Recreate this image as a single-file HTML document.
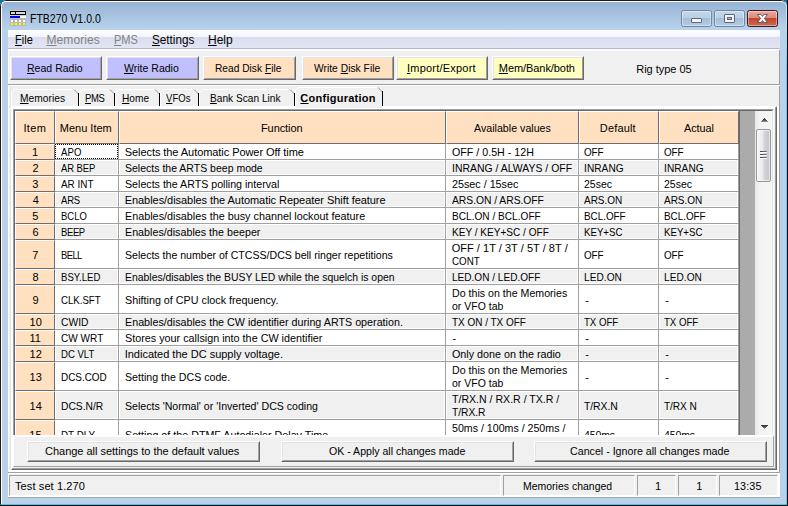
<!DOCTYPE html><html><head><meta charset="utf-8"><title>FTB270 V1.0.0</title><style>
*{margin:0;padding:0;box-sizing:border-box}
html,body{width:788px;height:506px;overflow:hidden;background:#000}
body{font-family:"Liberation Sans", sans-serif;font-size:11px;color:#000;position:relative}
.a{position:absolute}
.t{position:absolute;white-space:nowrap;line-height:16px;height:16px;transform-origin:0 0}
u{text-decoration:underline;text-underline-offset:1px;text-decoration-thickness:1px}
#win{position:absolute;left:0;top:0;width:787px;height:505px;background:#b9d1ea;border-radius:6px 6px 0 0;overflow:hidden}
.btn{position:absolute;border-top:1px solid #fff;border-left:1px solid #fff;border-right:1px solid #696969;border-bottom:1px solid #696969}
.btn:after{content:"";position:absolute;left:0;top:0;right:0;bottom:0;border-right:1px solid #a0a0a0;border-bottom:1px solid #a0a0a0;border-left:1px solid #e3e3e3;border-top:1px solid #e3e3e3}
.hc{position:absolute;top:0;height:33px;background:#ffe0c0;border-top:1px solid #fff;border-left:1px solid #fff;border-right:1px solid #6d6d6d;border-bottom:1px solid #6d6d6d}
.ic{position:absolute;left:0;width:40px;background:#ffe0c0;border-top:1px solid #fff;border-left:1px solid #fff;border-right:1px solid #6d6d6d;border-bottom:1px solid #6d6d6d}
.c{position:absolute;border-right:1px solid #a0a0a0;border-bottom:1px solid #a0a0a0;background:#fff}
.c.g{background:#f0f0f0;box-shadow:inset 1px 1px 0 #fff, inset -1px -1px 0 #fff}
.sp{position:absolute;top:475px;height:21px;border-top:1px solid #a0a0a0;border-left:1px solid #a0a0a0;border-right:1px solid #fff;border-bottom:1px solid #fff}
</style></head><body>
<div class="a" style="left:0;top:0;width:8px;height:8px;background:#0079ad"></div>
<div class="a" style="left:779px;top:0;width:8px;height:8px;background:#0079ad"></div>
<div id="win">
<div class="a" style="left:0;top:0;width:787px;height:30px;background:linear-gradient(#98b4d4 0px,#9ab6d6 4px,#b9d3ec 30px)"></div>
<div class="a" style="left:0;top:0;width:787px;height:505px;border-radius:6px 6px 0 0;border-left:1px solid #1c1c1c;border-top:1px solid #1c1c1c;border-right:1px solid #52d3f6;border-bottom:1px solid #37d0f5"></div>
<div class="a" style="left:786px;top:5px;width:1px;height:60px;background:linear-gradient(#b4f0ff,#a8ecff 40%,#52d3f6)"></div>
<div class="a" style="left:1px;top:1px;width:785px;height:503px;border-radius:5px 5px 0 0;border-left:1px solid #fff;border-top:1px solid #fff"></div>
<svg class="a" style="left:10px;top:10px" width="16" height="16" viewBox="0 0 16 16" shape-rendering="crispEdges"><rect x="0" y="0" width="16" height="16" fill="#b8b8b8"/><rect x="0" y="0" width="16" height="1" fill="#c8c8c8"/><rect x="0" y="1" width="16" height="4" fill="#000"/><rect x="1" y="2" width="4" height="2" fill="#d8d8d8"/><rect x="6" y="2" width="9" height="2" fill="#d8d8d8"/><rect x="0" y="5" width="16" height="1" fill="#d0d0d0"/><rect x="0" y="6" width="10" height="2" fill="#0000ff"/><rect x="10" y="6" width="6" height="2" fill="#fff"/><rect x="0" y="8" width="16" height="1" fill="#c0c0c0"/><rect x="1" y="10" width="2" height="2" fill="#fff"/><rect x="1" y="13" width="2" height="2" fill="#ffff00"/><rect x="5" y="10" width="2" height="2" fill="#fff"/><rect x="5" y="13" width="2" height="2" fill="#ffff00"/><rect x="9" y="10" width="2" height="2" fill="#fff"/><rect x="9" y="13" width="2" height="2" fill="#ffff00"/><rect x="13" y="10" width="2" height="2" fill="#fff"/><rect x="13" y="13" width="2" height="2" fill="#ffff00"/></svg>
<div class="t" id="title" style="left:30.15px;top:11px;letter-spacing:0.01px;transform:scaleX(0.8756);font-size:12px;">FTB270 V1.0.0</div>
<div class="a" style="left:681px;top:10px;width:31px;height:17px;border:1px solid #6f86a3;border-radius:2.5px;background:linear-gradient(#c3d6ea 0%,#bcd0e6 45%,#a5bedb 50%,#b4cbe4 100%);box-shadow:inset 0 0 0 1px rgba(255,255,255,.4)"></div>
<div class="a" style="left:714px;top:10px;width:31px;height:17px;border:1px solid #6f86a3;border-radius:2.5px;background:linear-gradient(#c3d6ea 0%,#bcd0e6 45%,#a5bedb 50%,#b4cbe4 100%);box-shadow:inset 0 0 0 1px rgba(255,255,255,.4)"></div>
<div class="a" style="left:747px;top:10px;width:31px;height:17px;border:1px solid #431422;border-radius:2.5px;background:linear-gradient(#e9a99b 0%,#dd8d7b 45%,#c4452b 50%,#cd6a50 100%);box-shadow:inset 0 0 0 1px rgba(255,255,255,.4)"></div>
<div class="a" style="left:691px;top:18px;width:11px;height:5px;background:#f4f4f4;border:1px solid #5a6a7c;border-radius:1px"></div>
<div class="a" style="left:724px;top:14px;width:11px;height:9px;background:#f4f4f4;border:1px solid #5a6a7c;border-radius:1px"></div>
<div class="a" style="left:727px;top:17px;width:5px;height:3px;background:#9db6d3;border:1px solid #5a6a7c"></div>
<svg class="a" style="left:756px;top:13px" width="13" height="11" viewBox="0 0 13 11"><path d="M1.5 1.5 L4.9 1.5 L6.5 3.4 L8.1 1.5 L11.5 1.5 L8.4 5.5 L11.5 9.5 L8.1 9.5 L6.5 7.6 L4.9 9.5 L1.5 9.5 L4.6 5.5 Z" fill="#fff" stroke="#50546a" stroke-width="0.9" stroke-linejoin="round"/></svg>
<div class="a" style="left:8px;top:30px;width:772px;height:467px;background:#f0f0f0"></div>
<div class="a" style="left:8px;top:497px;width:772px;height:1px;background:#a3a9b3"></div>
<div class="a" style="left:8px;top:30px;width:772px;height:21px;background:linear-gradient(#ffffff 0px,#f2f4fa 7px,#d9ddee 7px,#e2e5f3 18px,#b4b9cf 18px,#b4b9cf 19px,#fcfcfe 19px,#fcfcfe 21px)"></div>
<div class="t" id="menu0" style="left:15.03px;top:32px;letter-spacing:0.08px;transform:scaleX(0.9145);font-size:12px;"><u>F</u>ile</div>
<div class="t" id="menu1" style="left:46.49px;top:32px;letter-spacing:0.091px;font-size:12px;color:#838383;"><u>M</u>emories</div>
<div class="t" id="menu2" style="left:114.45px;top:32px;letter-spacing:0px;transform:scaleX(0.9178);font-size:12px;color:#838383;"><u>P</u>MS</div>
<div class="t" id="menu3" style="left:152.25px;top:32px;letter-spacing:0px;transform:scaleX(0.9761);font-size:12px;"><u>S</u>ettings</div>
<div class="t" id="menu4" style="left:208.12px;top:32px;letter-spacing:-0.074px;font-size:12px;"><u>H</u>elp</div>
<div class="a" style="left:8px;top:49px;width:1px;height:448px;background:#fff"></div>
<div class="a" style="left:779px;top:50px;width:1px;height:423px;background:#a0a0a0"></div>
<div class="a" style="left:777px;top:106px;width:2px;height:366px;background:#fff"></div>
<div class="a" style="left:9px;top:470px;width:770px;height:2px;background:#fff"></div>
<div class="a" style="left:10px;top:86px;width:1px;height:384px;background:#e6e6e6"></div>
<div class="btn" style="left:10px;top:56px;width:92px;height:24px;background:#c0c0ff"></div>
<div class="t" id="tb0" style="left:26.7px;top:60px;letter-spacing:0.01px;transform:scaleX(0.9567);"><u>R</u>ead Radio</div>
<div class="btn" style="left:106px;top:56px;width:93px;height:24px;background:#c0c0ff"></div>
<div class="t" id="tb1" style="left:124px;top:60px;letter-spacing:0px;transform:scaleX(0.9568);"><u>W</u>rite Radio</div>
<div class="btn" style="left:203px;top:56px;width:93px;height:24px;background:#ffe0c0"></div>
<div class="t" id="tb2" style="left:214.91px;top:60px;letter-spacing:0.024px;transform:scaleX(0.9232);">Read Disk <u>F</u>ile</div>
<div class="btn" style="left:302px;top:56px;width:92px;height:24px;background:#ffe0c0"></div>
<div class="t" id="tb3" style="left:313.87px;top:60px;letter-spacing:0.013px;transform:scaleX(0.9334);">Write <u>D</u>isk File</div>
<div class="btn" style="left:396px;top:56px;width:92px;height:24px;background:#ffffc0"></div>
<div class="t" id="tb4" style="left:407.06px;top:60px;letter-spacing:0.211px;"><u>I</u>mport/Export</div>
<div class="btn" style="left:492px;top:56px;width:92px;height:24px;background:#ffffc0"></div>
<div class="t" id="tb5" style="left:498.87px;top:60px;letter-spacing:-0.076px;"><u>M</u>em/Bank/both</div>
<div class="t" id="rig" style="left:636.31px;top:61px;letter-spacing:-0.035px;">Rig type 05</div>
<div class="a" style="left:8px;top:84px;width:772px;height:1px;background:#a0a0a0"></div>
<div class="a" style="left:8px;top:85px;width:772px;height:1px;background:#fff"></div>
<div class="a" style="left:11px;top:106px;width:766px;height:364px;border-left:2px solid #fff;border-top:3px solid #fff;border-right:2px solid #696969;border-bottom:2px solid #696969"></div>
<div class="a" style="left:12px;top:468px;width:764px;height:1px;background:#a0a0a0"></div>
<div class="a" style="left:775px;top:107px;width:1px;height:362px;background:#a0a0a0"></div>
<svg class="a" style="left:0;top:80px" width="400" height="30" viewBox="0 80 400 30"><path d="M11.5 107 L11.5 92.5 L14.5 89.5 L73.5 89.5" fill="none" stroke="#fff" stroke-width="1"/><path d="M74 89.5 L78.5 94" fill="none" stroke="#8a8a8a" stroke-width="0.9"/><path d="M78.5 93 L78.5 106" fill="none" stroke="#000" stroke-width="1" shape-rendering="crispEdges"/><path d="M79.5 107 L79.5 92.5 L82.5 89.5 L109.5 89.5" fill="none" stroke="#fff" stroke-width="1"/><path d="M110 89.5 L114.5 94" fill="none" stroke="#8a8a8a" stroke-width="0.9"/><path d="M114.5 93 L114.5 106" fill="none" stroke="#000" stroke-width="1" shape-rendering="crispEdges"/><path d="M115.5 107 L115.5 92.5 L118.5 89.5 L154.5 89.5" fill="none" stroke="#fff" stroke-width="1"/><path d="M155 89.5 L159.5 94" fill="none" stroke="#8a8a8a" stroke-width="0.9"/><path d="M159.5 93 L159.5 106" fill="none" stroke="#000" stroke-width="1" shape-rendering="crispEdges"/><path d="M160.5 107 L160.5 92.5 L163.5 89.5 L193.5 89.5" fill="none" stroke="#fff" stroke-width="1"/><path d="M194 89.5 L198.5 94" fill="none" stroke="#8a8a8a" stroke-width="0.9"/><path d="M198.5 93 L198.5 106" fill="none" stroke="#000" stroke-width="1" shape-rendering="crispEdges"/><path d="M199.5 107 L199.5 92.5 L202.5 89.5 L289.5 89.5" fill="none" stroke="#fff" stroke-width="1"/><path d="M290 89.5 L294.5 94" fill="none" stroke="#8a8a8a" stroke-width="0.9"/><path d="M294.5 93 L294.5 106" fill="none" stroke="#000" stroke-width="1" shape-rendering="crispEdges"/><path d="M295.5 107 L295.5 90.5 L298.5 87.5 L377.5 87.5" fill="none" stroke="#fff" stroke-width="1"/><path d="M378 87.5 L382.5 92" fill="none" stroke="#8a8a8a" stroke-width="0.9"/><path d="M382.5 91 L382.5 106" fill="none" stroke="#000" stroke-width="1" shape-rendering="crispEdges"/></svg>
<div class="a" style="left:296px;top:106px;width:86px;height:2px;background:#f0f0f0"></div>
<div class="t" id="tab0" style="left:19.83px;top:90px;letter-spacing:0.036px;transform:scaleX(0.9274);"><u>M</u>emories</div>
<div class="t" id="tab1" style="left:85.16px;top:90px;letter-spacing:-0.359px;transform:scaleX(0.86);"><u>P</u>MS</div>
<div class="t" id="tab2" style="left:122.1px;top:90px;letter-spacing:-0.002px;transform:scaleX(0.921);"><u>H</u>ome</div>
<div class="t" id="tab3" style="left:165.52px;top:90px;letter-spacing:0.079px;transform:scaleX(0.86);"><u>V</u>FOs</div>
<div class="t" id="tab4" style="left:210.39px;top:90px;letter-spacing:0.028px;transform:scaleX(0.9186);"><u>B</u>ank Scan Link</div>
<div class="t" id="tab5" style="left:300.36px;top:90px;letter-spacing:0.256px;font-weight:bold;"><u>C</u>onfiguration</div>
<div class="a" style="left:13px;top:109px;width:761px;height:328px;border-left:1px solid #a0a0a0;border-top:1px solid #a0a0a0;border-right:1px solid #fff;border-bottom:1px solid #fff"></div>
<div class="a" style="left:14px;top:110px;width:759px;height:326px;border-left:1px solid #696969;border-top:1px solid #696969;border-right:1px solid #e3e3e3;border-bottom:1px solid #e3e3e3"></div>
<div class="a" id="grid" style="left:15px;top:111px;width:757px;height:324px;background:#ababab;overflow:hidden">
<div class="hc" style="left:0px;width:40px"></div>
<div class="t" id="h0" style="left:8.43px;top:9px;letter-spacing:0.374px;">Item</div>
<div class="hc" style="left:40px;width:64px"></div>
<div class="t" id="h1" style="left:44.84px;top:9px;letter-spacing:-0.011px;">Menu Item</div>
<div class="hc" style="left:104px;width:327px"></div>
<div class="t" id="h2" style="left:245.97px;top:9px;letter-spacing:-0.076px;">Function</div>
<div class="hc" style="left:431px;width:133px"></div>
<div class="t" id="h3" style="left:458.75px;top:9px;letter-spacing:0.014px;transform:scaleX(0.9667);">Available values</div>
<div class="hc" style="left:564px;width:80px"></div>
<div class="t" id="h4" style="left:584.87px;top:9px;letter-spacing:0.157px;">Default</div>
<div class="hc" style="left:644px;width:80px"></div>
<div class="t" id="h5" style="left:669.1px;top:9px;letter-spacing:-0.041px;transform:scaleX(0.9846);">Actual</div>
<div class="ic" style="top:33px;height:16px"></div>
<div class="c" style="left:40px;top:33px;width:64px;height:16px"></div>
<div class="c" style="left:104px;top:33px;width:327px;height:16px"></div>
<div class="c" style="left:431px;top:33px;width:133px;height:16px"></div>
<div class="c" style="left:564px;top:33px;width:80px;height:16px"></div>
<div class="c" style="left:644px;top:33px;width:80px;height:16px"></div>
<div class="t" id="r0n" style="left:17.03px;top:33px;">1</div>
<div class="t" id="r0m" style="left:46px;top:33px;letter-spacing:0.048px;transform:scaleX(0.8721);">APO</div>
<div class="t" id="r0f" style="left:109.7px;top:33px;letter-spacing:-0.062px;">Selects the Automatic Power Off time</div>
<div class="t" id="r0a" style="left:437px;top:33px;letter-spacing:0.008px;transform:scaleX(0.9692);">OFF / 0.5H - 12H</div>
<div class="t" id="r0d" style="left:569px;top:33px;letter-spacing:-0.125px;transform:scaleX(0.8989);">OFF</div>
<div class="t" id="r0c" style="left:649px;top:33px;letter-spacing:-0.125px;transform:scaleX(0.8989);">OFF</div>
<div class="ic" style="top:49px;height:16px"></div>
<div class="c g" style="left:40px;top:49px;width:64px;height:16px"></div>
<div class="c g" style="left:104px;top:49px;width:327px;height:16px"></div>
<div class="c g" style="left:431px;top:49px;width:133px;height:16px"></div>
<div class="c g" style="left:564px;top:49px;width:80px;height:16px"></div>
<div class="c g" style="left:644px;top:49px;width:80px;height:16px"></div>
<div class="t" id="r1n" style="left:17.58px;top:49px;">2</div>
<div class="t" id="r1m" style="left:46px;top:49px;letter-spacing:-0.08px;transform:scaleX(0.86);">AR BEP</div>
<div class="t" id="r1f" style="left:110px;top:49px;letter-spacing:0.009px;transform:scaleX(0.9541);">Selects the ARTS beep mode</div>
<div class="t" id="r1a" style="left:437px;top:49px;letter-spacing:0.027px;transform:scaleX(0.946);">INRANG / ALWAYS / OFF</div>
<div class="t" id="r1d" style="left:569px;top:49px;letter-spacing:0.078px;transform:scaleX(0.9178);">INRANG</div>
<div class="t" id="r1c" style="left:649px;top:49px;letter-spacing:0.078px;transform:scaleX(0.9178);">INRANG</div>
<div class="ic" style="top:65px;height:16px"></div>
<div class="c" style="left:40px;top:65px;width:64px;height:16px"></div>
<div class="c" style="left:104px;top:65px;width:327px;height:16px"></div>
<div class="c" style="left:431px;top:65px;width:133px;height:16px"></div>
<div class="c" style="left:564px;top:65px;width:80px;height:16px"></div>
<div class="c" style="left:644px;top:65px;width:80px;height:16px"></div>
<div class="t" id="r2n" style="left:17.34px;top:65px;">3</div>
<div class="t" id="r2m" style="left:46px;top:65px;letter-spacing:0px;transform:scaleX(0.9027);">AR INT</div>
<div class="t" id="r2f" style="left:110px;top:65px;letter-spacing:0.004px;transform:scaleX(0.9673);">Selects the ARTS polling interval</div>
<div class="t" id="r2a" style="left:437px;top:65px;letter-spacing:-0.025px;transform:scaleX(0.9819);">25sec / 15sec</div>
<div class="t" id="r2d" style="left:569px;top:65px;letter-spacing:0px;transform:scaleX(0.9553);">25sec</div>
<div class="t" id="r2c" style="left:649px;top:65px;letter-spacing:0px;transform:scaleX(0.9553);">25sec</div>
<div class="ic" style="top:81px;height:16px"></div>
<div class="c g" style="left:40px;top:81px;width:64px;height:16px"></div>
<div class="c g" style="left:104px;top:81px;width:327px;height:16px"></div>
<div class="c g" style="left:431px;top:81px;width:133px;height:16px"></div>
<div class="c g" style="left:564px;top:81px;width:80px;height:16px"></div>
<div class="c g" style="left:644px;top:81px;width:80px;height:16px"></div>
<div class="t" id="r3n" style="left:17.7px;top:81px;">4</div>
<div class="t" id="r3m" style="left:46px;top:81px;letter-spacing:-0.191px;transform:scaleX(0.86);">ARS</div>
<div class="t" id="r3f" style="left:109.7px;top:81px;letter-spacing:-0.051px;">Enables/disables the Automatic Repeater Shift feature</div>
<div class="t" id="r3a" style="left:437px;top:81px;letter-spacing:-0.023px;transform:scaleX(0.9373);">ARS.ON / ARS.OFF</div>
<div class="t" id="r3d" style="left:569px;top:81px;letter-spacing:-0.013px;transform:scaleX(0.9081);">ARS.ON</div>
<div class="t" id="r3c" style="left:649px;top:81px;letter-spacing:-0.013px;transform:scaleX(0.9081);">ARS.ON</div>
<div class="ic" style="top:97px;height:16px"></div>
<div class="c" style="left:40px;top:97px;width:64px;height:16px"></div>
<div class="c" style="left:104px;top:97px;width:327px;height:16px"></div>
<div class="c" style="left:431px;top:97px;width:133px;height:16px"></div>
<div class="c" style="left:564px;top:97px;width:80px;height:16px"></div>
<div class="c" style="left:644px;top:97px;width:80px;height:16px"></div>
<div class="t" id="r4n" style="left:17.37px;top:97px;">5</div>
<div class="t" id="r4m" style="left:46px;top:97px;letter-spacing:-0.005px;transform:scaleX(0.86);">BCLO</div>
<div class="t" id="r4f" style="left:110px;top:97px;letter-spacing:0.002px;transform:scaleX(0.9814);">Enables/disables the busy channel lockout feature</div>
<div class="t" id="r4a" style="left:437px;top:97px;letter-spacing:0.004px;transform:scaleX(0.9182);">BCL.ON / BCL.OFF</div>
<div class="t" id="r4d" style="left:569px;top:97px;letter-spacing:0px;transform:scaleX(0.8961);">BCL.OFF</div>
<div class="t" id="r4c" style="left:649px;top:97px;letter-spacing:0px;transform:scaleX(0.8961);">BCL.OFF</div>
<div class="ic" style="top:113px;height:16px"></div>
<div class="c g" style="left:40px;top:113px;width:64px;height:16px"></div>
<div class="c g" style="left:104px;top:113px;width:327px;height:16px"></div>
<div class="c g" style="left:431px;top:113px;width:133px;height:16px"></div>
<div class="c g" style="left:564px;top:113px;width:80px;height:16px"></div>
<div class="c g" style="left:644px;top:113px;width:80px;height:16px"></div>
<div class="t" id="r5n" style="left:17.56px;top:113px;">6</div>
<div class="t" id="r5m" style="left:46px;top:113px;letter-spacing:-0.422px;transform:scaleX(0.86);">BEEP</div>
<div class="t" id="r5f" style="left:110px;top:113px;letter-spacing:0.02px;transform:scaleX(0.9718);">Enables/disables the beeper</div>
<div class="t" id="r5a" style="left:437px;top:113px;letter-spacing:0.021px;transform:scaleX(0.9114);">KEY / KEY+SC / OFF</div>
<div class="t" id="r5d" style="left:569px;top:113px;letter-spacing:0px;transform:scaleX(0.8798);">KEY+SC</div>
<div class="t" id="r5c" style="left:649px;top:113px;letter-spacing:0px;transform:scaleX(0.8798);">KEY+SC</div>
<div class="ic" style="top:129px;height:29px"></div>
<div class="c" style="left:40px;top:129px;width:64px;height:29px"></div>
<div class="c" style="left:104px;top:129px;width:327px;height:29px"></div>
<div class="c" style="left:431px;top:129px;width:133px;height:29px"></div>
<div class="c" style="left:564px;top:129px;width:80px;height:29px"></div>
<div class="c" style="left:644px;top:129px;width:80px;height:29px"></div>
<div class="t" id="r6n" style="left:17.26px;top:136px;">7</div>
<div class="t" id="r6m" style="left:46px;top:136px;letter-spacing:-0.69px;transform:scaleX(0.86);">BELL</div>
<div class="t" id="r6f" style="left:110px;top:136px;letter-spacing:-0.004px;transform:scaleX(0.9615);">Selects the number of CTCSS/DCS bell ringer repetitions</div>
<div class="t" id="r6a" style="left:436.65px;top:129px;letter-spacing:0.031px;">OFF / 1T / 3T / 5T / 8T /</div>
<div class="t" id="r6b" style="left:437px;top:142px;letter-spacing:0px;transform:scaleX(0.8904);">CONT</div>
<div class="t" id="r6d" style="left:569px;top:136px;letter-spacing:-0.125px;transform:scaleX(0.8989);">OFF</div>
<div class="t" id="r6c" style="left:649px;top:136px;letter-spacing:-0.125px;transform:scaleX(0.8989);">OFF</div>
<div class="ic" style="top:158px;height:16px"></div>
<div class="c g" style="left:40px;top:158px;width:64px;height:16px"></div>
<div class="c g" style="left:104px;top:158px;width:327px;height:16px"></div>
<div class="c g" style="left:431px;top:158px;width:133px;height:16px"></div>
<div class="c g" style="left:564px;top:158px;width:80px;height:16px"></div>
<div class="c g" style="left:644px;top:158px;width:80px;height:16px"></div>
<div class="t" id="r7n" style="left:17.6px;top:158px;">8</div>
<div class="t" id="r7m" style="left:46px;top:158px;letter-spacing:0.032px;transform:scaleX(0.8722);">BSY.LED</div>
<div class="t" id="r7f" style="left:110px;top:158px;letter-spacing:0.002px;transform:scaleX(0.9462);">Enables/disables the BUSY LED while the squelch is open</div>
<div class="t" id="r7a" style="left:437px;top:158px;letter-spacing:0.005px;transform:scaleX(0.914);">LED.ON / LED.OFF</div>
<div class="t" id="r7d" style="left:569px;top:158px;letter-spacing:0.066px;transform:scaleX(0.9182);">LED.ON</div>
<div class="t" id="r7c" style="left:649px;top:158px;letter-spacing:0.066px;transform:scaleX(0.9182);">LED.ON</div>
<div class="ic" style="top:174px;height:29px"></div>
<div class="c" style="left:40px;top:174px;width:64px;height:29px"></div>
<div class="c" style="left:104px;top:174px;width:327px;height:29px"></div>
<div class="c" style="left:431px;top:174px;width:133px;height:29px"></div>
<div class="c" style="left:564px;top:174px;width:80px;height:29px"></div>
<div class="c" style="left:644px;top:174px;width:80px;height:29px"></div>
<div class="t" id="r8n" style="left:17.58px;top:181px;">9</div>
<div class="t" id="r8m" style="left:46px;top:181px;letter-spacing:0px;transform:scaleX(0.8763);">CLK.SFT</div>
<div class="t" id="r8f" style="left:110px;top:181px;letter-spacing:-0.007px;transform:scaleX(0.979);">Shifting of CPU clock frequency.</div>
<div class="t" id="r8a" style="left:437px;top:174px;letter-spacing:0.01px;transform:scaleX(0.9644);">Do this on the Memories</div>
<div class="t" id="r8b" style="left:437px;top:187px;letter-spacing:0.023px;transform:scaleX(0.9507);">or VFO tab</div>
<div class="t" id="r8d" style="left:570.25px;top:181px;">-</div>
<div class="t" id="r8c" style="left:650.25px;top:181px;">-</div>
<div class="ic" style="top:203px;height:16px"></div>
<div class="c g" style="left:40px;top:203px;width:64px;height:16px"></div>
<div class="c g" style="left:104px;top:203px;width:327px;height:16px"></div>
<div class="c g" style="left:431px;top:203px;width:133px;height:16px"></div>
<div class="c g" style="left:564px;top:203px;width:80px;height:16px"></div>
<div class="c g" style="left:644px;top:203px;width:80px;height:16px"></div>
<div class="t" id="r9n" style="left:14.53px;top:203px;">10</div>
<div class="t" id="r9m" style="left:46px;top:203px;letter-spacing:0.046px;transform:scaleX(0.9326);">CWID</div>
<div class="t" id="r9f" style="left:110px;top:203px;letter-spacing:0.003px;transform:scaleX(0.9754);">Enables/disables the CW identifier during ARTS operation.</div>
<div class="t" id="r9a" style="left:437px;top:203px;letter-spacing:-0.013px;transform:scaleX(0.9071);">TX ON / TX OFF</div>
<div class="t" id="r9d" style="left:569px;top:203px;letter-spacing:-0.064px;transform:scaleX(0.8816);">TX OFF</div>
<div class="t" id="r9c" style="left:649px;top:203px;letter-spacing:-0.064px;transform:scaleX(0.8816);">TX OFF</div>
<div class="ic" style="top:219px;height:16px"></div>
<div class="c" style="left:40px;top:219px;width:64px;height:16px"></div>
<div class="c" style="left:104px;top:219px;width:327px;height:16px"></div>
<div class="c" style="left:431px;top:219px;width:133px;height:16px"></div>
<div class="c" style="left:564px;top:219px;width:80px;height:16px"></div>
<div class="c" style="left:644px;top:219px;width:80px;height:16px"></div>
<div class="t" id="r10n" style="left:14.53px;top:219px;">11</div>
<div class="t" id="r10m" style="left:46px;top:219px;letter-spacing:0.039px;transform:scaleX(0.9105);">CW WRT</div>
<div class="t" id="r10f" style="left:110px;top:219px;letter-spacing:0.003px;transform:scaleX(0.9809);">Stores your callsign into the CW identifier</div>
<div class="t" id="r10a" style="left:437.55px;top:219px;">-</div>
<div class="t" id="r10d" style="left:570.25px;top:219px;">-</div>
<div class="ic" style="top:235px;height:16px"></div>
<div class="c g" style="left:40px;top:235px;width:64px;height:16px"></div>
<div class="c g" style="left:104px;top:235px;width:327px;height:16px"></div>
<div class="c g" style="left:431px;top:235px;width:133px;height:16px"></div>
<div class="c g" style="left:564px;top:235px;width:80px;height:16px"></div>
<div class="c g" style="left:644px;top:235px;width:80px;height:16px"></div>
<div class="t" id="r11n" style="left:14.53px;top:235px;">12</div>
<div class="t" id="r11m" style="left:46px;top:235px;letter-spacing:0px;transform:scaleX(0.8696);">DC VLT</div>
<div class="t" id="r11f" style="left:109.7px;top:235px;letter-spacing:-0.003px;">Indicated the DC supply voltage.</div>
<div class="t" id="r11a" style="left:437px;top:235px;letter-spacing:0px;transform:scaleX(0.9778);">Only done on the radio</div>
<div class="t" id="r11d" style="left:570.25px;top:235px;">-</div>
<div class="t" id="r11c" style="left:650.25px;top:235px;">-</div>
<div class="ic" style="top:251px;height:29px"></div>
<div class="c" style="left:40px;top:251px;width:64px;height:29px"></div>
<div class="c" style="left:104px;top:251px;width:327px;height:29px"></div>
<div class="c" style="left:431px;top:251px;width:133px;height:29px"></div>
<div class="c" style="left:564px;top:251px;width:80px;height:29px"></div>
<div class="c" style="left:644px;top:251px;width:80px;height:29px"></div>
<div class="t" id="r12n" style="left:14.53px;top:258px;">13</div>
<div class="t" id="r12m" style="left:46px;top:258px;letter-spacing:0.004px;transform:scaleX(0.8989);">DCS.COD</div>
<div class="t" id="r12f" style="left:110px;top:258px;letter-spacing:0.001px;transform:scaleX(0.9666);">Setting the DCS code.</div>
<div class="t" id="r12a" style="left:437px;top:251px;letter-spacing:0.01px;transform:scaleX(0.9644);">Do this on the Memories</div>
<div class="t" id="r12b" style="left:437px;top:264px;letter-spacing:0.023px;transform:scaleX(0.9507);">or VFO tab</div>
<div class="t" id="r12d" style="left:570.25px;top:258px;">-</div>
<div class="t" id="r12c" style="left:650.25px;top:258px;">-</div>
<div class="ic" style="top:280px;height:29px"></div>
<div class="c g" style="left:40px;top:280px;width:64px;height:29px"></div>
<div class="c g" style="left:104px;top:280px;width:327px;height:29px"></div>
<div class="c g" style="left:431px;top:280px;width:133px;height:29px"></div>
<div class="c g" style="left:564px;top:280px;width:80px;height:29px"></div>
<div class="c g" style="left:644px;top:280px;width:80px;height:29px"></div>
<div class="t" id="r13n" style="left:14.53px;top:287px;">14</div>
<div class="t" id="r13m" style="left:46px;top:287px;letter-spacing:-0.009px;transform:scaleX(0.9338);">DCS.N/R</div>
<div class="t" id="r13f" style="left:110px;top:287px;letter-spacing:-0px;transform:scaleX(0.9633);">Selects 'Normal' or 'Inverted' DCS coding</div>
<div class="t" id="r13a" style="left:437px;top:280px;letter-spacing:-0.009px;transform:scaleX(0.9623);">T/RX.N / RX.R / TX.R /</div>
<div class="t" id="r13b" style="left:437px;top:293px;letter-spacing:-0.042px;transform:scaleX(0.9342);">T/RX.R</div>
<div class="t" id="r13d" style="left:569px;top:287px;letter-spacing:-0.078px;transform:scaleX(0.9453);">T/RX.N</div>
<div class="t" id="r13c" style="left:649px;top:287px;letter-spacing:-0.08px;transform:scaleX(0.922);">T/RX N</div>
<div class="ic" style="top:309px;height:29px"></div>
<div class="c" style="left:40px;top:309px;width:64px;height:29px"></div>
<div class="c" style="left:104px;top:309px;width:327px;height:29px"></div>
<div class="c" style="left:431px;top:309px;width:133px;height:29px"></div>
<div class="c" style="left:564px;top:309px;width:80px;height:29px"></div>
<div class="c" style="left:644px;top:309px;width:80px;height:29px"></div>
<div class="t" id="r14n" style="left:14.28px;top:316px;">15</div>
<div class="t" id="r14m" style="left:46px;top:316px;letter-spacing:0px;transform:scaleX(0.8932);">DT DLY</div>
<div class="t" id="r14f" style="left:110px;top:316px;letter-spacing:0.003px;transform:scaleX(0.9739);">Setting of the DTMF Autodialer Delay Time</div>
<div class="t" id="r14a" style="left:437px;top:309px;letter-spacing:-0.009px;transform:scaleX(0.9672);">50ms / 100ms / 250ms /</div>
<div class="t" id="r14d" style="left:569px;top:316px;letter-spacing:-0.105px;transform:scaleX(0.9521);">450ms</div>
<div class="t" id="r14c" style="left:649px;top:316px;letter-spacing:-0.105px;transform:scaleX(0.9521);">450ms</div>
<div class="a" style="left:724px;top:0;width:1px;height:324px;background:#696969"></div>
<div class="a" style="left:40px;top:33px;width:63px;height:15px;border:1px dotted #000"></div>
<div class="a" style="left:740px;top:0;width:17px;height:324px;background:linear-gradient(90deg,#e8e8e8,#f3f3f3 30%,#f6f6f6 100%)"></div>
<div class="a" style="left:741px;top:18px;width:15px;height:53px;border:1px solid #979797;border-radius:2px;background:linear-gradient(90deg,#f5f5f5 0%,#e9e9eb 45%,#d5d5d9 55%,#c3c3c9 100%);box-shadow:inset 0 0 0 1px rgba(255,255,255,.6)"></div>
<div class="a" style="left:745px;top:40px;width:7px;height:1px;background:linear-gradient(90deg,#3e424c,#7b7f88)"></div>
<div class="a" style="left:745px;top:41px;width:7px;height:1px;background:#fafafa"></div>
<div class="a" style="left:745px;top:43px;width:7px;height:1px;background:linear-gradient(90deg,#3e424c,#7b7f88)"></div>
<div class="a" style="left:745px;top:44px;width:7px;height:1px;background:#fafafa"></div>
<div class="a" style="left:745px;top:46px;width:7px;height:1px;background:linear-gradient(90deg,#3e424c,#7b7f88)"></div>
<div class="a" style="left:745px;top:47px;width:7px;height:1px;background:#fafafa"></div>
<svg class="a" style="left:746px;top:7px" width="7" height="4" viewBox="0 0 7 4" shape-rendering="crispEdges"><rect x="3" y="0" width="1" height="1" fill="#3a3a3a"/><rect x="2" y="1" width="3" height="1" fill="#404040"/><rect x="1" y="2" width="5" height="1" fill="#5a5a5a"/><rect x="0" y="3" width="7" height="1" fill="#8a8a8a"/></svg>
<svg class="a" style="left:746px;top:314px" width="7" height="4" viewBox="0 0 7 4" shape-rendering="crispEdges"><rect x="0" y="0" width="7" height="1" fill="#3a3a3a"/><rect x="1" y="1" width="5" height="1" fill="#474747"/><rect x="2" y="2" width="3" height="1" fill="#686868"/><rect x="3" y="3" width="1" height="1" fill="#9a9a9a"/></svg>
</div>
<div class="a" style="left:13px;top:435px;width:761px;height:32px;background:#f0f0f0;border-top:2px solid #fff;border-left:1px solid #fff;border-right:1px solid #a0a0a0;border-bottom:1px solid #a0a0a0"></div>
<div class="btn" style="left:27px;top:441px;width:233px;height:21px;background:#f0f0f0"></div>
<div class="t" id="bb0" style="left:45.03px;top:443px;letter-spacing:-0.018px;">Change all settings to the default values</div>
<div class="btn" style="left:281px;top:441px;width:233px;height:21px;background:#f0f0f0"></div>
<div class="t" id="bb1" style="left:328.55px;top:443px;letter-spacing:-0.007px;transform:scaleX(0.962);">OK - Apply all changes made</div>
<div class="btn" style="left:534px;top:441px;width:233px;height:21px;background:#f0f0f0"></div>
<div class="t" id="bb2" style="left:570.23px;top:443px;letter-spacing:-0.006px;transform:scaleX(0.9701);">Cancel - Ignore all changes made</div>
<div class="a" style="left:8px;top:472px;width:772px;height:1px;background:#a0a0a0"></div>
<div class="a" style="left:8px;top:473px;width:772px;height:1px;background:#fff"></div>
<div class="a" style="left:8px;top:475px;width:1px;height:22px;background:#fff"></div>
<div class="a" style="left:778px;top:474px;width:2px;height:23px;background:#fff"></div>
<div class="a" style="left:9px;top:496px;width:771px;height:1px;background:#fff"></div>
<div class="sp" style="left:9px;width:492px"></div>
<div class="sp" style="left:503px;width:132px"></div>
<div class="sp" style="left:637px;width:39px"></div>
<div class="sp" style="left:678px;width:39px"></div>
<div class="sp" style="left:719px;width:59px"></div>
<div class="t" id="sb0" style="left:15px;top:478px;letter-spacing:0.108px;">Test set 1.270</div>
<div class="t" id="sb1" style="left:523.3px;top:478px;letter-spacing:0.021px;transform:scaleX(0.95);">Memories changed</div>
<div class="t" id="sb2" style="left:655.1px;top:478px;">1</div>
<div class="t" id="sb3" style="left:696.28px;top:478px;">1</div>
<div class="t" id="sb4" style="left:733.84px;top:478px;letter-spacing:0.123px;transform:scaleX(0.9805);">13:35</div>
</div>
</body></html>
